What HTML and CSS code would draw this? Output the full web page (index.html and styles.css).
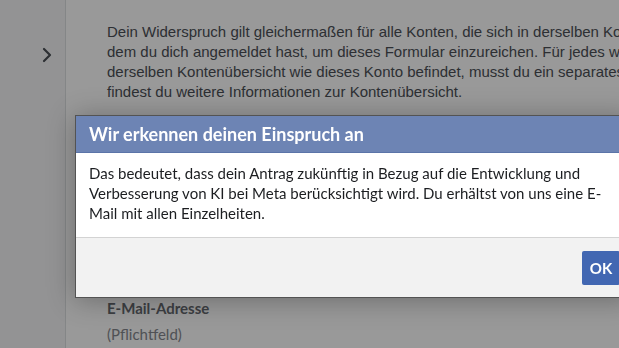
FILE: index.html
```html
<!DOCTYPE html>
<html lang="de">
<head>
<meta charset="utf-8">
<title>Widerspruch</title>
<link rel="stylesheet" href="styles.css">
</head>
<body>
<div class="page">
  <aside class="sidebar">
    <svg class="chevron" width="10" height="16" viewBox="0 0 10 16"><path d="M2 2 L8 8 L2 14" fill="none" stroke="#4b4f56" stroke-width="2.2" stroke-linecap="round" stroke-linejoin="round"/></svg>
  </aside>
  <main class="content">
    <p class="intro"><span>Dein Widerspruch gilt gleichermaßen für alle Konten, die sich in derselben Kontenübersicht befinden wie das Konto, mit</span><br><span>dem du dich angemeldet hast, um dieses Formular einzureichen. Für jedes weitere Konto, das sich nicht in</span><br><span>derselben Kontenübersicht wie dieses Konto befindet, musst du ein separates Formular einreichen. Hier</span><br><span>findest du weitere Informationen zur Kontenübersicht.</span></p>
    <div class="spacer"></div>
    <div class="field-label">E-Mail-Adresse</div>
    <div class="field-hint">(Pflichtfeld)</div>
  </main>
</div>
<div class="overlay"></div>
<div class="dialog" role="dialog">
  <div class="dialog-header">Wir erkennen deinen Einspruch an</div>
  <div class="dialog-body">Das bedeutet, dass dein Antrag zukünftig in Bezug auf die Entwicklung und<br>Verbesserung von KI bei Meta berücksichtigt wird. Du erhältst von uns eine E-<br>Mail mit allen Einzelheiten.</div>
  <div class="dialog-footer"><button class="ok-btn">OK</button></div>
</div>
</body>
</html>
```
FILE: styles.css
```css
html, body {
  margin: 0;
  padding: 0;
  width: 619px;
  height: 348px;
  overflow: hidden;
  background: #ffffff;
}
.page {
  display: flex;
  height: 348px;
}
.sidebar {
  width: 66px;
  flex: none;
  background: #f5f6f7;
  border-right: 1px solid #dddfe2;
  padding-top: 47px;
  padding-left: 42px;
  box-sizing: border-box;
}
.chevron {
  display: block;
}
.content {
  flex: none;
  width: 900px;
  padding-left: 41px;
  padding-top: 22px;
  font-family: "Liberation Sans", Arial, sans-serif;
}
.intro {
  margin: 0;
  font-size: 15px;
  line-height: 20px;
  color: #4b4f56;
  white-space: nowrap;
}
.spacer {
  height: 196px;
}
.field-label {
  font-family: Lato, "Noto Sans", sans-serif;
  font-weight: 700;
  font-size: 15px;
  color: #666a70;
  line-height: 20px;
}
.field-hint {
  font-family: Lato, "Noto Sans", sans-serif;
  font-size: 15px;
  color: #85888e;
  line-height: 20px;
  margin-top: 6px;
}
.overlay {
  position: fixed;
  inset: 0;
  background: rgba(0, 0, 0, 0.4);
}
.dialog {
  position: absolute;
  left: 75px;
  top: 115px;
  width: 556px;
  border: 1px solid rgba(40, 40, 40, 0.8);
  box-shadow: 0 2px 26px rgba(0, 0, 0, 0.3);
  font-family: Lato, "Noto Sans", sans-serif;
  background: #ffffff;
}
.dialog-header {
  background: #6d84b4;
  border-bottom: 1px solid #5b74a8;
  color: #ffffff;
  font-weight: 700;
  font-size: 18px;
  line-height: 36px;
  height: 36px;
  padding-left: 13px;
}
.dialog-body {
  padding: 10px 13px 14px;
  font-size: 15px;
  line-height: 20px;
  color: #1c1e21;
  border-bottom: 1px solid #d3d3d3;
}
.dialog-footer {
  background: #f2f2f2;
  height: 59px;
  display: flex;
  justify-content: flex-end;
  align-items: center;
  padding-right: 12px;
}
.ok-btn {
  background: #4267b2;
  border: none;
  border-radius: 2px;
  color: #ffffff;
  font-family: Lato, "Noto Sans", sans-serif;
  font-weight: 700;
  font-size: 15px;
  width: 38px;
  height: 34px;
  padding: 0;
}
```
